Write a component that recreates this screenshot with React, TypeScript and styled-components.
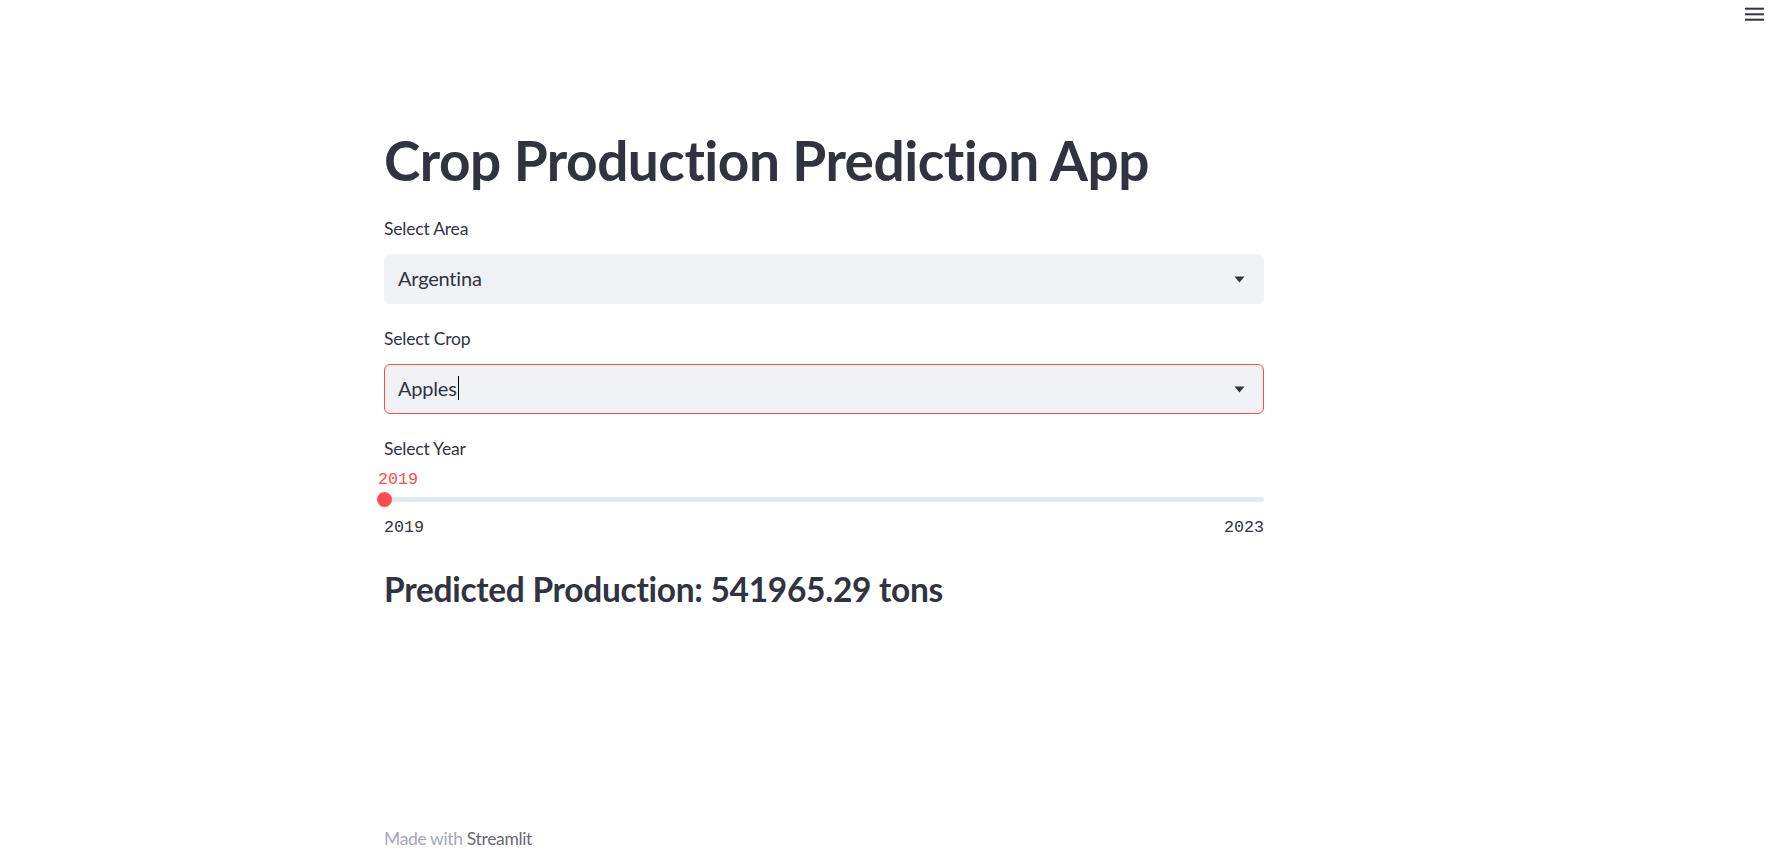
import React from "react";
import styled, { createGlobalStyle } from "styled-components";

const GlobalStyle = createGlobalStyle`
  html, body {
    margin: 0;
    padding: 0;
    background: #ffffff;
  }
  body {
    font-family: Lato, "Noto Sans", sans-serif;
    color: #31333f;
  }
  * { box-sizing: border-box; }
`;

const Page = styled.div`
  min-height: 100vh;
  display: flex;
  flex-direction: column;
`;

const Header = styled.header`
  height: 30px;
  display: flex;
  justify-content: flex-end;
  align-items: flex-start;
  padding: 7px 20px 0 0;
`;

const MenuButton = styled.button`
  border: none;
  background: transparent;
  padding: 0;
  width: 19px;
  height: 14px;
  display: flex;
  cursor: pointer;
`;

const Main = styled.main`
  margin-left: 384px;
  width: 880px;
  padding-top: 97px;
  display: flex;
  flex-direction: column;
  gap: 24px;
`;

const Title = styled.h1`
  margin: 0 0 1px;
  font-size: 55px;
  line-height: 66px;
  font-weight: 700;
  letter-spacing: -0.5px;
  color: #31333f;
`;

const Field = styled.div`
  display: flex;
  flex-direction: column;
`;

const Label = styled.label<{ $gap: number }>`
  font-size: 17.5px;
  line-height: 21px;
  letter-spacing: -0.2px;
  color: #31333f;
  margin-bottom: ${(p) => p.$gap}px;
`;

const SelectBox = styled.div<{ $focused?: boolean }>`
  height: 50px;
  border-radius: 6px;
  background: #f0f2f6;
  border: 1px solid ${(p) => (p.$focused ? "#ff4b4b" : "#f0f2f6")};
  display: flex;
  align-items: center;
  padding: 0 18px 0 13px;
`;

const SelectValue = styled.span`
  flex: 1;
  font-size: 20px;
  line-height: 24px;
  letter-spacing: -0.2px;
  color: #31333f;
  display: flex;
  align-items: center;
  margin-top: -2px;
`;

const Caret = styled.span`
  display: inline-block;
  width: 1.5px;
  height: 24px;
  background: #000;
  margin-left: 1px;
`;

const Arrow = styled.svg`
  width: 11px;
  height: 7px;
  flex: none;
`;

const ValueRow = styled.div`
  position: relative;
  height: 21px;
  margin-top: 9.5px;
`;

const ThumbValue = styled.span`
  position: absolute;
  top: 0;
  margin-left: -6px;
  font-family: "Liberation Mono", "DejaVu Sans Mono", monospace;
  font-size: 16.7px;
  line-height: 21px;
  color: #ff4b4b;
`;

const TrackRow = styled.div`
  position: relative;
  height: 15px;
  margin-top: 2.2px;
  display: flex;
  align-items: center;
`;

const Track = styled.div`
  width: 100%;
  height: 5px;
  border-radius: 3px;
  background: #e5e9f0;
`;

const Thumb = styled.div`
  position: absolute;
  top: 0;
  width: 15px;
  height: 15px;
  margin-left: -7.5px;
  border-radius: 50%;
  background: #ff4b4b;
`;

const TickRow = styled.div`
  display: flex;
  justify-content: space-between;
  margin-top: 10.8px;
  font-family: "Liberation Mono", "DejaVu Sans Mono", monospace;
  font-size: 16.7px;
  line-height: 21px;
  color: #31333f;
`;

const Result = styled.h3`
  margin: 6.6px 0 0;
  font-size: 33.5px;
  line-height: 41px;
  font-weight: 700;
  letter-spacing: -0.3px;
  color: #31333f;
`;

const Footer = styled.footer`
  margin-top: auto;
  margin-left: 384px;
  padding-bottom: 5px;
  font-size: 17.5px;
  line-height: 21px;
  letter-spacing: -0.35px;
  color: #a3a8b8;
`;

const FooterLink = styled.a`
  color: #696b73;
  text-decoration: none;
`;

function SelectField({ label, value, focused }: { label: string; value: string; focused?: boolean }) {
  return (
    <Field>
      <Label $gap={15}>{label}</Label>
      <SelectBox $focused={focused}>
        <SelectValue>
          {value}
          {focused && <Caret />}
        </SelectValue>
        <Arrow viewBox="0 0 11 7">
          <path d="M0.5 0.5 L10.5 0.5 L5.5 6.5 Z" fill="#31333f" />
        </Arrow>
      </SelectBox>
    </Field>
  );
}

function YearSlider({ label, min, max, value }: { label: string; min: number; max: number; value: number }) {
  const pct = ((value - min) / (max - min)) * 100;
  return (
    <Field>
      <Label $gap={0}>{label}</Label>
      <ValueRow>
        <ThumbValue style={{ left: `${pct}%` }}>{value}</ThumbValue>
      </ValueRow>
      <TrackRow>
        <Track />
        <Thumb style={{ left: `${pct}%` }} />
      </TrackRow>
      <TickRow>
        <span>{min}</span>
        <span>{max}</span>
      </TickRow>
    </Field>
  );
}

export default function App() {
  return (
    <Page>
      <GlobalStyle />
      <Header>
        <MenuButton aria-label="menu">
          <svg width="19" height="14" viewBox="0 0 19 14">
            <rect x="0" y="0.7" width="19" height="2" fill="#31333f" />
            <rect x="0" y="6.3" width="19" height="2" fill="#31333f" />
            <rect x="0" y="11.7" width="19" height="2" fill="#31333f" />
          </svg>
        </MenuButton>
      </Header>
      <Main>
        <Title>Crop Production Prediction App</Title>
        <SelectField label="Select Area" value="Argentina" />
        <SelectField label="Select Crop" value="Apples" focused />
        <YearSlider label="Select Year" min={2019} max={2023} value={2019} />
        <Result>Predicted Production: 541965.29 tons</Result>
      </Main>
      <Footer>
        Made with <FooterLink href="#">Streamlit</FooterLink>
      </Footer>
    </Page>
  );
}
